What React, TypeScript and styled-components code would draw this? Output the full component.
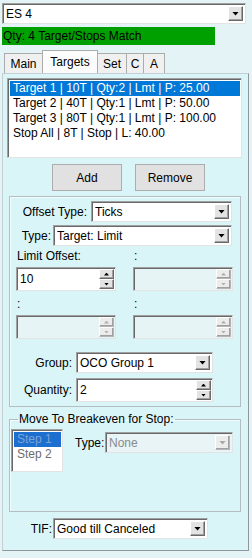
import React from "react";
import styled, { createGlobalStyle, css } from "styled-components";

const Global = createGlobalStyle`
  html, body {
    margin: 0;
    padding: 0;
    background: #e3f3f6;
  }
  body {
    font-family: "Liberation Sans", Arial, sans-serif;
    font-size: 12px;
    color: #000;
  }
`;

const sunken = css`
  box-sizing: border-box;
  border: 1px solid;
  border-color: #a0a0a0 #e3e3e3 #e3e3e3 #a0a0a0;
  box-shadow: inset 1px 1px 0 #696969;
`;

const raised = css`
  box-sizing: border-box;
  border: 1px solid;
  border-color: #fff #696969 #696969 #fff;
  box-shadow: inset -1px -1px 0 #a0a0a0;
  background: #e3e3e3;
`;

const Form = styled.div`
  width: 252px;
  height: 558px;
  box-sizing: border-box;
  padding: 3px 0 0 2px;
  overflow: hidden;
`;

const Combo = styled.div<{ $w: number; $disabled?: boolean }>`
  ${sunken};
  width: ${(p) => p.$w}px;
  height: 21px;
  display: flex;
  align-items: center;
  padding: 2px 2px 2px 3px;
  background: ${(p) => (p.$disabled ? "#e8f4f6" : "#fff")};
  color: ${(p) => (p.$disabled ? "#8a8a8a" : "#000")};
  flex-shrink: 0;
`;

const FieldText = styled.span`
  flex: 1;
  white-space: nowrap;
  overflow: hidden;
`;

const DropButton = styled.div<{ $disabled?: boolean }>`
  ${raised};
  width: 15px;
  align-self: stretch;
  display: flex;
  align-items: center;
  justify-content: center;
  background: ${(p) => (p.$disabled ? "#ececec" : "#e3e3e3")};
  border-color: ${(p) =>
    p.$disabled ? "#fff #b5b5b5 #b5b5b5 #fff" : "#fff #696969 #696969 #fff"};
  &::after {
    content: "";
    width: 7px;
    height: 4px;
    background: ${(p) => (p.$disabled ? "#a8a8a8" : "#000")};
    clip-path: polygon(0 0, 100% 0, 50% 100%);
  }
`;

const Numeric = styled.div<{ $w: number; $disabled?: boolean }>`
  ${sunken};
  width: ${(p) => p.$w}px;
  height: 24px;
  display: flex;
  padding: 1px 1px 1px 3px;
  background: ${(p) => (p.$disabled ? "#e6f4f6" : "#fff")};
  flex-shrink: 0;
`;

const NumText = styled.span`
  flex: 1;
  align-self: center;
  padding-bottom: 1px;
`;

const Spin = styled.div`
  width: 15px;
  display: flex;
  flex-direction: column;
`;

const SpinButton = styled.div<{ $up?: boolean; $disabled?: boolean }>`
  ${raised};
  flex: 1;
  display: flex;
  align-items: center;
  justify-content: center;
  background: ${(p) => (p.$disabled ? "#ececec" : "#e3e3e3")};
  border-color: ${(p) =>
    p.$disabled ? "#fff #b5b5b5 #b5b5b5 #fff" : "#fff #696969 #696969 #fff"};
  &::after {
    content: "";
    width: 5px;
    height: 3px;
    background: ${(p) => (p.$disabled ? "#b0b0b0" : "#000")};
    clip-path: ${(p) =>
      p.$up
        ? "polygon(50% 0, 100% 100%, 0 100%)"
        : "polygon(0 0, 100% 0, 50% 100%)"};
  }
`;

const StatusBar = styled.div`
  margin-top: 3px;
  width: 213px;
  height: 18px;
  line-height: 18px;
  padding-left: 1px;
  box-sizing: border-box;
  background: #00a000;
  white-space: nowrap;
`;

const TabStrip = styled.div`
  display: flex;
  align-items: flex-end;
  height: 23px;
  margin: 5px 0 0 2px;
`;

const Tab = styled.div<{ $w: number; $active?: boolean }>`
  box-sizing: border-box;
  width: ${(p) => p.$w}px;
  height: ${(p) => (p.$active ? 23 : 20)}px;
  margin-right: -1px;
  border: 1px solid #acacac;
  border-bottom: none;
  background: ${(p) => (p.$active ? "#fcfcfc" : "#f0f0f0")};
  display: flex;
  align-items: center;
  justify-content: center;
  padding-bottom: ${(p) => (p.$active ? 1 : 0)}px;
  position: relative;
  z-index: ${(p) => (p.$active ? 1 : 0)};
`;

const Panel = styled.div`
  box-sizing: border-box;
  width: 247px;
  height: 478px;
  background: #d9f5f8;
  border: 1px solid;
  border-color: #c3cfd2 #8f979a #8f979a #c3cfd2;
`;

const ListBox = styled.div<{ $w: number; $h: number; $disabled?: boolean }>`
  ${sunken};
  width: ${(p) => p.$w}px;
  height: ${(p) => p.$h}px;
  padding: 2px 1px 1px 2px;
  background: #fff;
  color: ${(p) => (p.$disabled ? "#6d6d6d" : "#000")};
  flex-shrink: 0;
`;

const ListItem = styled.div<{ $selected?: boolean; $disabled?: boolean }>`
  height: 15px;
  line-height: 15px;
  padding-left: 3px;
  white-space: nowrap;
  background: ${(p) =>
    p.$selected ? (p.$disabled ? "#1b6fd0" : "#0078d7") : "transparent"};
  color: ${(p) =>
    p.$selected ? (p.$disabled ? "#7ea3d2" : "#fff") : "inherit"};
`;

const TargetList = styled(ListBox)`
  margin: 4px 0 0 4px;
`;

const ButtonRow = styled.div`
  display: flex;
  gap: 13px;
  margin: 6px 0 0 49px;
`;

const Button = styled.div`
  box-sizing: border-box;
  width: 70px;
  height: 27px;
  background: #e1e1e1;
  border: 1px solid #adadad;
  display: flex;
  align-items: center;
  justify-content: center;
`;

const GroupBox = styled.fieldset<{ $top: number; $bottom: number }>`
  box-sizing: border-box;
  width: 232px;
  margin: ${(p) => p.$top}px 0 0 6px;
  padding: 0 0 ${(p) => p.$bottom}px 0;
  min-width: 0;
  border: 1px solid #b4bec1;
  box-shadow: inset 1px 1px 0 #f4fdfe;
`;

const Legend = styled.legend`
  margin-left: 8px;
  padding: 0 1px;
  line-height: 14px;
`;

const FieldRow = styled.div<{ $top: number; $left?: number }>`
  display: flex;
  align-items: center;
  margin-top: ${(p) => p.$top}px;
  padding-left: ${(p) => p.$left ?? 0}px;
`;

const Label = styled.label<{ $w: number; $gap: number }>`
  width: ${(p) => p.$w}px;
  margin-right: ${(p) => p.$gap}px;
  text-align: right;
  white-space: nowrap;
  flex-shrink: 0;
`;

const OffsetGrid = styled.div`
  display: grid;
  grid-template-columns: 100px 100px;
  column-gap: 17px;
  row-gap: 6px;
  margin-top: 3px;
  padding-left: 6px;
`;

const OffsetCell = styled.div`
  display: flex;
  flex-direction: column;
  gap: 4px;
`;

const CellLabel = styled.div`
  height: 14px;
  line-height: 14px;
  padding-left: 1px;
`;

const BreakevenBody = styled.div`
  display: flex;
  align-items: flex-start;
  margin-top: 3px;
  padding-left: 1px;
`;

function ComboBox({ w, value, disabled }: { w: number; value: string; disabled?: boolean }) {
  return (
    <Combo $w={w} $disabled={disabled}>
      <FieldText>{value}</FieldText>
      <DropButton $disabled={disabled} />
    </Combo>
  );
}

function NumericUpDown({ w, value, disabled }: { w: number; value?: string; disabled?: boolean }) {
  return (
    <Numeric $w={w} $disabled={disabled}>
      <NumText>{value}</NumText>
      <Spin>
        <SpinButton $up $disabled={disabled} />
        <SpinButton $disabled={disabled} />
      </Spin>
    </Numeric>
  );
}

const targets = [
  "Target 1 | 10T | Qty:2 | Lmt | P: 25.00",
  "Target 2 | 40T | Qty:1 | Lmt | P: 50.00",
  "Target 3 | 80T | Qty:1 | Lmt | P: 100.00",
  "Stop All | 8T | Stop | L: 40.00",
];

const offsets = [
  { label: "Limit Offset:", value: "10", disabled: false },
  { label: ":", disabled: true },
  { label: ":", disabled: true },
  { label: ":", disabled: true },
];

export default function App() {
  return (
    <>
      <Global />
      <Form>
        <ComboBox w={244} value="ES 4" />
        <StatusBar>Qty: 4 Target/Stops Match</StatusBar>

        <TabStrip>
          <Tab $w={39}>Main</Tab>
          <Tab $w={56} $active>
            Targets
          </Tab>
          <Tab $w={30}>Set</Tab>
          <Tab $w={18}>C</Tab>
          <Tab $w={22}>A</Tab>
        </TabStrip>

        <Panel>
          <TargetList $w={235} $h={80}>
            {targets.map((t, i) => (
              <ListItem key={t} $selected={i === 0}>
                {t}
              </ListItem>
            ))}
          </TargetList>

          <ButtonRow>
            <Button>Add</Button>
            <Button>Remove</Button>
          </ButtonRow>

          <GroupBox $top={5} $bottom={4}>
            <FieldRow $top={4}>
              <Label $w={77} $gap={4}>Offset Type:</Label>
              <ComboBox w={141} value="Ticks" />
            </FieldRow>
            <FieldRow $top={3}>
              <Label $w={41} $gap={2}>Type:</Label>
              <ComboBox w={179} value="Target: Limit" />
            </FieldRow>

            <OffsetGrid>
              {offsets.map((o, i) => (
                <OffsetCell key={i}>
                  <CellLabel>{o.label}</CellLabel>
                  <NumericUpDown w={100} value={o.value} disabled={o.disabled} />
                </OffsetCell>
              ))}
            </OffsetGrid>

            <FieldRow $top={13}>
              <Label $w={62} $gap={4}>Group:</Label>
              <ComboBox w={137} value="OCO Group 1" />
            </FieldRow>
            <FieldRow $top={5}>
              <Label $w={62} $gap={4}>Quantity:</Label>
              <NumericUpDown w={137} value="2" />
            </FieldRow>
          </GroupBox>

          <GroupBox $top={5} $bottom={39}>
            <Legend>Move To Breakeven for Stop:</Legend>
            <BreakevenBody>
              <ListBox $w={52} $h={43} $disabled>
                <ListItem $selected $disabled>
                  Step 1
                </ListItem>
                <ListItem>Step 2</ListItem>
              </ListBox>
              <FieldRow $top={3} $left={12}>
                <Label $w={29} $gap={1}>Type:</Label>
                <ComboBox w={128} value="None" disabled />
              </FieldRow>
            </BreakevenBody>
          </GroupBox>

          <FieldRow $top={6}>
            <Label $w={49} $gap={1}>TIF:</Label>
            <ComboBox w={155} value="Good till Canceled" />
          </FieldRow>
        </Panel>
      </Form>
    </>
  );
}
